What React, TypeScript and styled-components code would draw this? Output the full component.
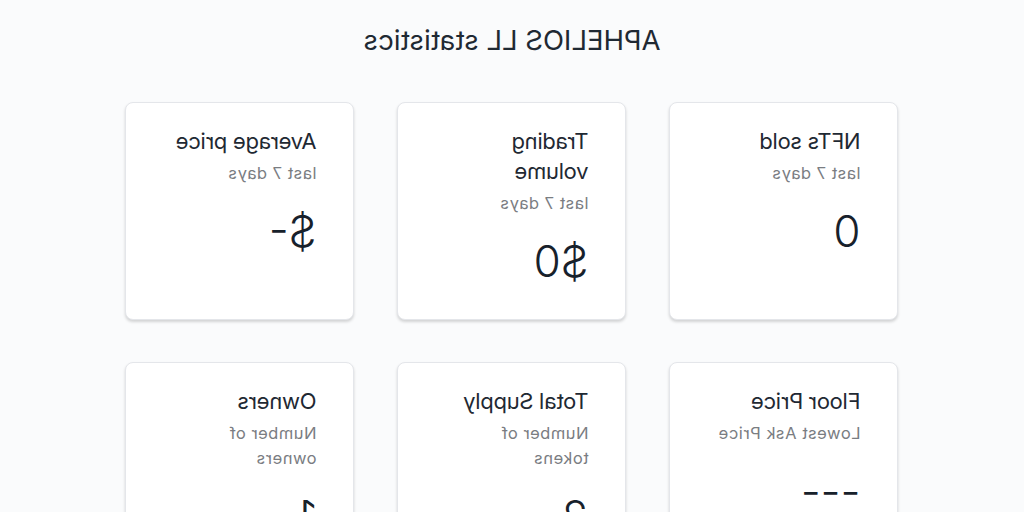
import React from 'react'
import styled, { createGlobalStyle } from 'styled-components'

const GlobalStyle = createGlobalStyle`
  html, body {
    margin: 0;
    padding: 0;
    background: #fafbfc;
    font-family: Inter, Roboto, "Liberation Sans", sans-serif;
  }
`

// the whole page is shown mirrored in the reference
const Page = styled.div`
  width: 1024px;
  height: 512px;
  overflow: hidden;
  transform: scaleX(-1);
  box-sizing: border-box;
  padding-top: 24px;
  background: #fafbfc;
`

const Heading = styled.h2`
  margin: 0;
  text-align: center;
  font-size: 27.5px;
  line-height: 32px;
  font-weight: 400;
  color: #1f2933;
`

const Grid = styled.div`
  display: grid;
  grid-template-columns: repeat(3, 229px);
  column-gap: 43px;
  row-gap: 42px;
  justify-content: center;
  margin-top: 46px;
`

const Card = styled.div`
  height: 218px;
  box-sizing: border-box;
  padding: 23px 46px 0 37px;
  background: #fff;
  border: 1px solid #e4e6ea;
  border-radius: 8px;
  box-shadow: 0 2px 3px rgba(0, 0, 0, 0.16);
`

const Title = styled.div`
  font-size: 22px;
  line-height: 30px;
  letter-spacing: -0.3px;
  color: #1f2933;
`

const Sub = styled.div`
  margin-top: 5px;
  font-size: 16.5px;
  line-height: 25px;
  color: #7a7d82;
  letter-spacing: 0.5px;
`

const Value = styled.div`
  margin-top: 18px;
  font-size: 44px;
  line-height: 54px;
  font-weight: 300;
  color: #17212b;
`

const stats = [
  { title: 'NFTs sold', sub: 'last 7 days', value: '0' },
  { title: 'Trading volume', sub: 'last 7 days', value: '$0' },
  { title: 'Average price', sub: 'last 7 days', value: '$-' },
  { title: 'Floor Price', sub: 'Lowest Ask Price', value: '---' },
  { title: 'Total Supply', sub: 'Number of tokens', value: '2' },
  { title: 'Owners', sub: 'Number of owners', value: '1' },
]

const App: React.FC = () => {
  return (
    <>
      <GlobalStyle />
      <Page>
        <Heading>APHELIOS LL statistics</Heading>
        <Grid>
          {stats.map((s) => (
            <Card key={s.title}>
              <Title>{s.title}</Title>
              <Sub>{s.sub}</Sub>
              <Value>{s.value}</Value>
            </Card>
          ))}
        </Grid>
      </Page>
    </>
  )
}

export default App
